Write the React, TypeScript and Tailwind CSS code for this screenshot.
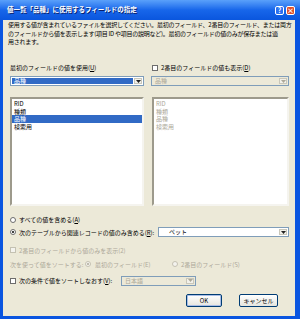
import type { ReactNode } from "react";

const items = ["RID", "種類", "品種", "検索用"];

function Arrow({ disabled = false }: { disabled?: boolean }) {
  return (
    <svg width="5" height="3" viewBox="0 0 5 3">
      <path d="M0 0h5L2.5 3z" fill={disabled ? "#aca899" : "#222"} />
    </svg>
  );
}

function Combo({
  text,
  selected = false,
  disabled = false,
  className = "",
}: {
  text: string;
  selected?: boolean;
  disabled?: boolean;
  className?: string;
}) {
  return (
    <div
      className={`flex h-[10px] items-stretch border border-[#7f9db9] p-px ${
        disabled ? "bg-[#ece9d8]" : "bg-white"
      } ${className}`}
    >
      <div
        className={`flex flex-1 items-center pl-[2px] leading-none ${
          selected ? "bg-[#316ac5] text-white" : disabled ? "text-[#aca899]" : "text-black"
        }`}
      >
        {text}
      </div>
      <div className="ml-px flex w-[8px] items-center justify-center border border-[#c9c7ba] bg-[#f2f1ea]">
        <Arrow disabled={disabled} />
      </div>
    </div>
  );
}

function ListBox({ disabled = false, selected }: { disabled?: boolean; selected?: number }) {
  return (
    <div className="h-[109px] border-2 border-t-[#9d9a8c] border-l-[#9d9a8c] border-r-[#f5f4ef] border-b-[#f5f4ef] bg-white pt-[1px]">
      {items.map((it, i) => (
        <div
          key={it}
          className={`h-[7.6px] pl-[2px] leading-[7.6px] ${
            i === selected ? "bg-[#316ac5] text-white" : disabled ? "text-[#aca899]" : "text-black"
          }`}
        >
          {it}
        </div>
      ))}
    </div>
  );
}

function Check({ disabled = false }: { disabled?: boolean }) {
  return (
    <span
      className={`inline-block h-[6px] w-[6px] shrink-0 border ${
        disabled ? "border-[#c4c1b2] bg-[#f4f3ee]" : "border-[#6d6d6d] bg-white"
      }`}
    />
  );
}

function Radio({ on = false, disabled = false }: { on?: boolean; disabled?: boolean }) {
  return (
    <span
      className={`flex h-[6px] w-[6px] shrink-0 items-center justify-center rounded-full border ${
        disabled ? "border-[#c4c1b2] bg-[#f4f3ee]" : "border-[#6d6d6d] bg-white"
      }`}
    >
      {on && (
        <span className={`h-[2px] w-[2px] rounded-full ${disabled ? "bg-[#aca899]" : "bg-black"}`} />
      )}
    </span>
  );
}

function Row({ children, className = "" }: { children: ReactNode; className?: string }) {
  return <div className={`flex items-center whitespace-nowrap ${className}`}>{children}</div>;
}

function Btn({ children, isDefault = false, className = "" }: { children: ReactNode; isDefault?: boolean; className?: string }) {
  return (
    <div
      className={`flex h-[13px] items-center justify-center rounded-[2px] border bg-gradient-to-b from-white to-[#e6e5de] text-black ${
        isDefault ? "border-[#003c74] shadow-[inset_0_0_0_1px_#a9bde6]" : "border-[#003c74]"
      } ${className}`}
    >
      {children}
    </div>
  );
}

export default function App() {
  return (
    <div className="flex h-[319px] w-[300px] flex-col bg-[#0a55e0] font-['Noto_Sans_CJK_JP','Noto_Sans',sans-serif] text-[6px] text-black">
      <div className="flex h-[20px] items-center bg-gradient-to-b from-[#5aa0fa] via-[#1766ea] to-[#0a56de] pl-[7px] pr-[5px]">
        <span className="flex-1 text-[6.5px] font-bold text-white [text-shadow:1px_1px_0_#0a1e6a]">
          値一覧「品種」に使用するフィールドの指定
        </span>
        <span className="mr-[2px] flex h-[9px] w-[9px] items-center justify-center rounded-[2px] border border-white bg-[#2b6ff0] text-[7px] font-bold leading-none text-white">
          ?
        </span>
        <span className="flex h-[9px] w-[9px] items-center justify-center rounded-[2px] border border-white bg-[#e0512a] text-[7px] font-bold leading-none text-white">
          ×
        </span>
      </div>
      <div className="mb-[3px] ml-[3px] mr-[5px] flex flex-1 flex-col bg-[#ece9d8] pl-[7px] pr-[6px]">
        <p className="-ml-[2px] whitespace-nowrap pt-[1px] leading-[8.5px] tracking-[-0.25px]">
          使用する値が含まれているファイルを選択してください。最初のフィールド、2番目のフィールド、または両方
          <br />
          のフィールドから値を表示します(項目 ID や項目の説明など)。最初のフィールドの値のみが保存または適
          <br />
          用されます。
        </p>
        <div className="mt-[17px] flex gap-[7px]">
          <div className="flex w-[134px] flex-col">
            <Row className="h-[8px]">最初のフィールドの値を使用(<span className="underline">U</span>)</Row>
            <Combo text="品種" selected className="mt-[4.5px]" />
            <div className="mt-[11px]">
              <ListBox selected={2} />
            </div>
          </div>
          <div className="flex flex-1 flex-col">
            <Row className="h-[8px] gap-[3px] pl-[1px]">
              <Check />
              <span>
                2番目のフィールドの値も表示(<span className="underline">D</span>)
              </span>
            </Row>
            <Combo text="品種" disabled className="mt-[4.5px]" />
            <div className="mt-[11px] pl-[1px]">
              <ListBox disabled />
            </div>
          </div>
        </div>
        <Row className="mt-[9.5px] h-[8px] gap-[3px]">
          <Radio />
          <span>
            すべての値を含める(<span className="underline">A</span>)
          </span>
        </Row>
        <Row className="mt-[3.5px] h-[10px] gap-[3px]">
          <Radio on />
          <span>
            次のテーブルから関連レコードの値のみ含める(<span className="underline">R</span>):
          </span>
          <Combo text="ペット" className="ml-auto w-[131px] [&>div:first-child]:pl-[9px]" />
        </Row>
        <Row className="mt-[9px] h-[8px] gap-[3px] text-[#aca899]">
          <Check disabled />
          <span>2番目のフィールドから値のみを表示(2)</span>
        </Row>
        <Row className="mt-[6px] h-[8px] text-[#aca899]">
          <span className="w-[75px]">次を使って値をソートする:</span>
          <Radio on disabled />
          <span className="ml-[4px] w-[77px]">最初のフィールド(E)</span>
          <Radio disabled />
          <span className="ml-[3px]">2番目のフィールド(S)</span>
        </Row>
        <Row className="mt-[8px] h-[9px] gap-[3px]">
          <Check />
          <span className="w-[99px]">
            次の条件で値をソートしなおす(<span className="underline">V</span>):
          </span>
          <Combo text="日本語" disabled className="w-[75px]" />
        </Row>
        <div className="mt-[9px] flex">
          <Btn isDefault className="ml-[176px] w-[36px]">OK</Btn>
          <Btn className="ml-[17px] w-[39px]">キャンセル</Btn>
        </div>
      </div>
    </div>
  );
}
